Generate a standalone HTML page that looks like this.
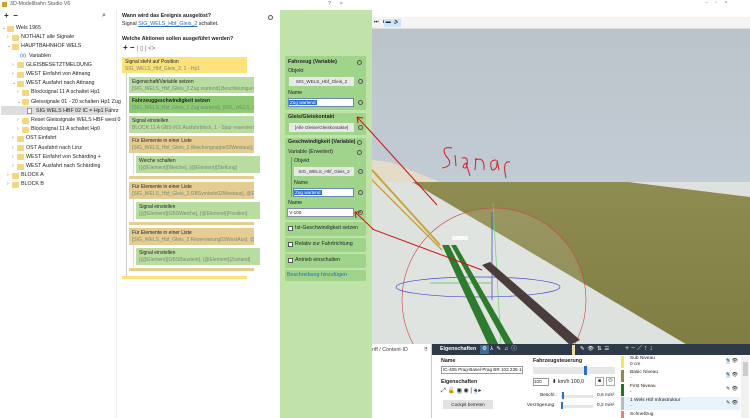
<!DOCTYPE html>
<html><head><meta charset="utf-8"><style>
*{margin:0;padding:0;box-sizing:border-box}
body{width:750px;height:418px;overflow:hidden;position:relative;font-family:"Liberation Sans",sans-serif;background:#fff;color:#222}
.a{position:absolute}
.t{position:absolute;font-size:5.3px;white-space:nowrap;line-height:7px}
.f{position:absolute;width:7px;height:6px;background:#f3d680;border-radius:1px}
.blk{position:absolute;padding:2px 3px;font-size:5px;line-height:7px;white-space:nowrap;overflow:hidden}
.blk i{font-style:normal;display:block;color:#7a8a70}
.y{background:#fbe27a}.g{background:#b9dca0}.dg{background:#8ccb72}.tn{background:#e5cc93}
.gb{position:absolute;background:#9fd48a;border-radius:1px}
.fld{position:absolute;background:#e8e8e8;font-size:4.6px;text-align:center;line-height:9px;color:#333}
.sel{position:absolute;background:#fff;border:1px solid #6a8ab0;font-size:4.6px;line-height:7px}
.sel b{background:#2d6fd1;color:#fff;font-weight:normal;padding:0 1px}
.dot{position:absolute;width:5px;height:5px;border:1.2px solid #555;border-radius:50%}
.cb{position:absolute;width:5px;height:5px;border:1px solid #555;background:#fff}
</style></head><body>
<div class="a" style="left:2px;top:2px;width:5px;height:5px;background:#c9a227"></div>
<div class="t" style="left:10px;top:1px;color:#555">3D-Modellbahn Studio V6</div>
<div class="t" style="left:328px;top:1px;color:#666">?&nbsp;&nbsp;&nbsp;&nbsp;&nbsp;&nbsp;×</div>
<div class="t" style="left:4px;top:12px;font-size:8px;font-weight:bold">+&nbsp;&nbsp;−</div>
<div class="t" style="left:102px;top:12px;font-size:7px">⌕</div>
<div class="a" style="left:116px;top:10px;width:1px;height:408px;background:#eee"></div>
<div class="a" style="left:1px;top:106px;width:110px;height:9px;background:#ddd"></div>
<div id="tree"></div>
<div class="t" style="left:122px;top:13px;font-weight:bold">Wann wird das Ereignis ausgelöst?</div>
<div class="t" style="left:122px;top:21px">Signal <span style="color:#2a6ab8;text-decoration:underline">SIG_WELS_Hbf_Gleis_2</span> schaltet.</div>
<div class="dot" style="left:268px;top:15px"></div>
<div class="t" style="left:122px;top:36px;font-weight:bold">Welche Aktionen sollen ausgeführt werden?</div>
<div class="t" style="left:123px;top:44px;font-size:8px;font-weight:bold">+ − <span style="font-weight:normal;font-size:6px;color:#666">| ▯ | &lt;&gt;</span></div>
<div class="a" style="left:126px;top:73px;width:1px;height:205px;background:#ccc"></div>
<div class="a" style="left:133px;top:153px;width:1px;height:22px;background:#ddd"></div>
<div class="a" style="left:133px;top:199px;width:1px;height:22px;background:#ddd"></div>
<div class="a" style="left:133px;top:245px;width:1px;height:22px;background:#ddd"></div>
<div class="blk y" style="left:122px;top:57px;width:125px;height:16px">Signal steht auf Position<i>SIG_WELS_Hbf_Gleis_2, 1 - Hp1</i></div>
<div class="blk g" style="left:129px;top:77px;width:125px;height:16px">Eigenschaft/Variable setzen<i>[SIG_WELS_Hbf_Gleis_2.Zug wartend].Beschleunigung] ...</i></div>
<div class="blk dg" style="left:129px;top:96px;width:125px;height:17px"><b>Fahrzeuggeschwindigkeit setzen</b><i>[SIG_WELS_Hbf_Gleis_2.Zug wartend], [SIG_WELS_Hbf...</i></div>
<div class="blk g" style="left:129px;top:116px;width:125px;height:17px">Signal einstellen<i>BLOCK 11 A GBS #01 Ausfahrblock, 1 - Spur reserviert</i></div>
<div class="blk tn" style="left:129px;top:136px;width:125px;height:17px">Für Elemente in einer Liste<i>[SIG_WELS_Hbf_Gleis_2.Weichengruppe02Westaus], @...</i></div>
<div class="blk g" style="left:136px;top:156px;width:124px;height:17px">Weiche schalten<i>[{@Element}[Weiche], {@Element}[Stellung]</i></div>
<div class="a tn" style="left:129px;top:176px;width:125px;height:3px"></div>
<div class="blk tn" style="left:129px;top:182px;width:125px;height:17px">Für Elemente in einer Liste<i>[SIG_WELS_Hbf_Gleis_2.GBSymbole02Westaus], @Element</i></div>
<div class="blk g" style="left:136px;top:202px;width:124px;height:17px">Signal einstellen<i>[{@Element}[GBSWeiche], {@Element}[Position]</i></div>
<div class="a tn" style="left:129px;top:222px;width:125px;height:3px"></div>
<div class="blk tn" style="left:129px;top:228px;width:125px;height:17px">Für Elemente in einer Liste<i>[SIG_WELS_Hbf_Gleis_2.Reservierung02WestAus], @Ele...</i></div>
<div class="blk g" style="left:136px;top:248px;width:124px;height:17px">Signal einstellen<i>[{@Element}[GBSBaustein], {@Element}[Zustand]</i></div>
<div class="a tn" style="left:129px;top:268px;width:125px;height:3px"></div>
<div class="a y" style="left:122px;top:276px;width:125px;height:3px"></div>
<div class="a" style="left:280px;top:10px;width:92px;height:408px;background:#bfe3a8"></div>
<div class="gb" style="left:285px;top:56px;width:81px;height:54px"></div>
<div class="t" style="left:288px;top:59px;font-weight:bold">Fahrzeug (Variable)</div><div class="dot" style="left:357px;top:60px"></div>
<div class="t" style="left:288px;top:68px">Objekt</div>
<div class="fld" style="left:289px;top:77px;width:65px;height:9px">SIG_WELS_Hbf_Gleis_2</div><div class="dot" style="left:358px;top:79px"></div>
<div class="t" style="left:288px;top:90px">Name</div>
<div class="sel" style="left:288px;top:98px;width:66px;height:9px"><b>Zug wartend</b></div><div class="dot" style="left:358px;top:100px"></div>
<div class="gb" style="left:285px;top:113px;width:81px;height:22px"></div>
<div class="t" style="left:288px;top:114px;font-weight:bold">Gleis/Gleiskontakt</div>
<div class="fld" style="left:289px;top:123px;width:65px;height:9px">[Alle Gleise/Gleiskontakte]</div><div class="dot" style="left:358px;top:125px"></div>
<div class="gb" style="left:285px;top:138px;width:81px;height:82px"></div>
<div class="t" style="left:288px;top:139px;font-weight:bold">Geschwindigkeit (Variable)</div><div class="dot" style="left:357px;top:140px"></div>
<div class="t" style="left:288px;top:149px">Variable (Erweitert)</div><div class="dot" style="left:357px;top:150px"></div>
<div class="a" style="left:291px;top:157px;width:1px;height:40px;background:#7a9a6a"></div>
<div class="t" style="left:294px;top:158px">Objekt</div>
<div class="fld" style="left:294px;top:167px;width:60px;height:9px">SIG_WELS_Hbf_Gleis_2</div><div class="dot" style="left:358px;top:169px"></div>
<div class="t" style="left:294px;top:180px">Name</div>
<div class="sel" style="left:293px;top:188px;width:61px;height:9px"><b>Zug wartend</b></div><div class="dot" style="left:358px;top:190px"></div>
<div class="t" style="left:288px;top:200px">Name</div>
<div class="sel" style="left:287px;top:208px;width:67px;height:9px;border-color:#88a">&nbsp;V-100</div><div class="dot" style="left:358px;top:210px"></div>
<div class="gb" style="left:285px;top:222px;width:81px;height:14px"></div><div class="cb" style="left:288px;top:226px"></div><div class="t" style="left:295px;top:225px">Ist-Geschwindigkeit setzen</div>
<div class="gb" style="left:285px;top:238px;width:81px;height:14px"></div><div class="cb" style="left:288px;top:242px"></div><div class="t" style="left:295px;top:241px">Relativ zur Fahrtrichtung</div>
<div class="gb" style="left:285px;top:254px;width:81px;height:14px"></div><div class="cb" style="left:288px;top:258px"></div><div class="t" style="left:295px;top:257px">Antrieb einschalten</div>
<div class="gb" style="left:285px;top:270px;width:81px;height:11px"></div><div class="t" style="left:287px;top:272px;color:#2a6ab8">Beschreibung hinzufügen</div>
<div class="a" style="left:372px;top:0;width:378px;height:17px;background:#fff"></div>
<div class="t" style="left:705px;top:0;color:#888">–&nbsp;&nbsp;&nbsp;&nbsp;&nbsp;▫&nbsp;&nbsp;&nbsp;&nbsp;&nbsp;×</div>
<div class="a" style="left:372px;top:17px;width:378px;height:12px;background:#f4f4f4;border-bottom:1px solid #ddd"></div>
<div class="a" style="left:384px;top:19px;width:17px;height:8px;background:#cfe3f5"></div>
<div class="t" style="left:374px;top:19px;font-size:5px">⏭ &nbsp;&nbsp;⭳ ▬ &nbsp;🔈</div>
<svg class="a" style="left:372px;top:29px" width="378" height="389" viewBox="372 29 378 389">
<defs><linearGradient id="sky" x1="0" y1="0" x2="0" y2="1"><stop offset="0" stop-color="#bcc4ca"/><stop offset="1" stop-color="#c2ccd5"/></linearGradient>
<linearGradient id="gr" x1="0" y1="0" x2="0" y2="1"><stop offset="0" stop-color="#8f8c52"/><stop offset="1" stop-color="#7d7a3f"/></linearGradient></defs>
<rect x="372" y="29" width="378" height="160" fill="url(#sky)"/>
<rect x="372" y="182" width="378" height="240" fill="#dde2df"/>
<polygon points="412,182 628,182 750,197 750,382" fill="url(#gr)"/>
<polygon points="372,160 390,162 440,182 372,182" fill="#ece0c4" opacity=".8"/>
<circle cx="494" cy="300" r="92" fill="#f4f4ec" opacity=".12"/>
<circle cx="494" cy="300" r="92" fill="none" stroke="#d04040" stroke-width=".6"/>
<ellipse cx="478" cy="287" rx="82" ry="10" fill="none" stroke="#4a4ad0" stroke-width=".7"/>
<line x1="492" y1="212" x2="492" y2="300" stroke="#5050c0" stroke-width=".8"/>
<line x1="430" y1="283" x2="492" y2="283" stroke="#50c050" stroke-width=".8"/>
<line x1="493" y1="203" x2="505" y2="418" stroke="#70d070" stroke-width=".7"/>
<line x1="372" y1="170" x2="440" y2="245" stroke="#c9a23a" stroke-width="2"/>
<line x1="372" y1="180" x2="442" y2="250" stroke="#c9a23a" stroke-width="1.5"/>
<polygon points="442,245 449,245 535,418 522,418" fill="#2e7a2e"/>
<polygon points="451,245 456,245 556,418 546,418" fill="#2e7a2e"/>
<polygon points="482,265 490,262 580,340 570,345" fill="#4a3e3c"/>
<rect x="452" y="236" width="16" height="4" fill="#fff" opacity=".8"/>
<path d="M452,148 Q440,146 446,156 Q455,166 442,168 M455,155 L456,166 M462,158 Q470,156 466,168 Q460,168 466,163 L470,176 M476,158 L475,170 M475,160 Q485,156 484,170 M496,160 Q488,160 492,170 Q498,170 497,160 L499,170 M510,162 Q502,160 506,178" fill="none" stroke="#d02020" stroke-width="1"/>
<line x1="372" y1="133" x2="437" y2="205" stroke="#cc1111" stroke-width="1"/>
<line x1="372" y1="229" x2="482" y2="270" stroke="#cc1111" stroke-width="1"/>
</svg>
<svg class="a" style="left:0;top:0" width="750" height="418">
<line x1="357" y1="117" x2="373" y2="134" stroke="#cc1111" stroke-width="1"/>
<path d="M357,117 l1,6 M357,117 l6,1" stroke="#cc1111" stroke-width="1" fill="none"/>
<line x1="355" y1="212" x2="373" y2="229" stroke="#cc1111" stroke-width="1"/>
<path d="M355,212 l1,6 M355,212 l6,0" stroke="#cc1111" stroke-width="1" fill="none"/>
</svg>
<div class="a" style="left:372px;top:344px;width:60px;height:74px;background:#fff;border-right:1px solid #ccc"></div>
<div class="t" style="left:372px;top:347px;color:#444">riff / Content-ID</div>
<div class="t" style="left:424px;top:347px;font-size:5px">⠿</div>
<div class="a" style="left:432px;top:344px;width:189px;height:11px;background:#2f3a48"></div>
<div class="t" style="left:440px;top:346px;color:#fff;font-weight:bold">Eigenschaften</div>
<div class="a" style="left:480px;top:345px;width:9px;height:9px;background:#3f6b8f"></div>
<div class="t" style="left:482px;top:346px;color:#fff;font-size:5.5px">⚙ &nbsp;⅄ &nbsp;✎ &nbsp;♫ &nbsp;ⓘ</div>
<div class="a" style="left:572px;top:345px;width:3px;height:10px;background:#f0d9a0"></div>
<div class="t" style="left:580px;top:346px;color:#fff">✎ &nbsp;👁 &nbsp;⇅ &nbsp;☰</div>
<div class="a" style="left:432px;top:355px;width:189px;height:63px;background:#fff"></div>
<div class="t" style="left:441px;top:358px;font-weight:bold">Name</div>
<div class="a" style="left:441px;top:366px;width:82px;height:8px;border:1px solid #999;font-size:4.6px;line-height:6px;padding-left:1px">IC-405 Prag-Basel-Prag BR 103 235-1</div>
<div class="t" style="left:441px;top:379px;font-weight:bold">Eigenschaften</div>
<div class="t" style="left:441px;top:388px;font-size:6px">⤢ 🔓 <span style="background:#cfe3f5">◉</span> ◉ | <span style="background:#cfe3f5">◂</span> ▸</div>
<div class="a" style="left:443px;top:400px;width:50px;height:9px;background:#e2e2e2;font-size:4.6px;text-align:center;line-height:9px">Cockpit betreten</div>
<div class="t" style="left:533px;top:358px;font-weight:bold">Fahrzeugsteuerung</div>
<div class="a" style="left:533px;top:367px;width:82px;height:7px;background:#e6e6e6"></div>
<div class="a" style="left:584px;top:366px;width:3px;height:9px;background:#2c6fc0"></div>
<div class="a" style="left:533px;top:378px;width:16px;height:8px;border:1px solid #999;font-size:4.6px;line-height:6px">100</div>
<div class="t" style="left:552px;top:379px">⬍ km/h 100,0</div>
<div class="a" style="left:595px;top:377px;width:9px;height:9px;border:1px solid #aaa;font-size:5px;text-align:center;line-height:7px">■</div>
<div class="a" style="left:606px;top:377px;width:9px;height:9px;border:1px solid #aaa;font-size:5px;text-align:center;line-height:7px">⏻</div>
<div class="t" style="left:540px;top:392px;font-size:4.8px">Beschl.:</div><div class="a" style="left:561px;top:395px;width:32px;height:3px;background:#e6e6e6"></div><div class="a" style="left:562px;top:392px;width:2px;height:7px;background:#2c6fc0"></div><div class="t" style="left:597px;top:392px;font-size:4.8px">0,6 m/s²</div>
<div class="t" style="left:527px;top:402px;font-size:4.8px">Verzögerung:</div><div class="a" style="left:561px;top:405px;width:32px;height:3px;background:#e6e6e6"></div><div class="a" style="left:561px;top:402px;width:2px;height:7px;background:#2c6fc0"></div><div class="t" style="left:597px;top:402px;font-size:4.8px">0,2 m/s²</div>
<div class="a" style="left:621px;top:344px;width:129px;height:11px;background:#2f3a48"></div>
<div class="t" style="left:625px;top:345px;color:#ddd;font-size:7px">+ − ⟋ ↑ ↓</div>
<div class="a" style="left:621px;top:355px;width:129px;height:63px;background:#fff"></div>
<div class="a" style="left:621px;top:356px;width:3px;height:12px;background:#f5e84a"></div>
<div class="t" style="left:630px;top:356px;font-size:4.8px;line-height:6px">Sub Niveau<br>0 cm</div>
<div class="a" style="left:621px;top:370px;width:3px;height:12px;background:#8a8a4a"></div>
<div class="t" style="left:630px;top:370px;font-size:4.8px;line-height:6px">Basic Niveau<br>-</div>
<div class="a" style="left:621px;top:384px;width:3px;height:12px;background:#1a7a1a"></div>
<div class="t" style="left:630px;top:384px;font-size:4.8px;line-height:6px">First Niveau<br>-</div>
<div class="a" style="left:624px;top:397px;width:116px;height:13px;background:#e8f2fb"></div>
<div class="a" style="left:621px;top:397px;width:3px;height:13px;background:#bbb"></div>
<div class="t" style="left:630px;top:398px;font-size:4.8px;line-height:6px">1 Wels Hbf Infrastruktur<br>-</div>
<div class="a" style="left:621px;top:411px;width:3px;height:7px;background:#e88080"></div>
<div class="t" style="left:630px;top:411px;font-size:4.8px">Schnellzug</div>
<div class="t" style="left:726px;top:358px;font-size:5px"><span style="background:#cfe3f5">✎</span> 👁<br><br><span style="background:#cfe3f5">✎</span> 👁<br><br>✎ 👁<br><br>✎ 👁</div>
<div class="a" style="left:741px;top:356px;width:8px;height:62px;background:#f0f0f0"></div>
<div class="a" style="left:743px;top:362px;width:5px;height:14px;background:#ccc"></div>
<script>
var rows=[[1,"Wels 1965",1],[2,"NOTHALT alle Signale",0],[2,"HAUPTBAHNHOF WELS",1],[3,"(x) Variablen",2],[3,"GLEISBESETZTMELDUNG",0],[3,"WEST Einfahrt  von Attnang",0],[3,"WEST Ausfahrt  nach  Attnang",1],[4,"Blocksignal  11 A  schaltet  Hp1",0],[4,"Gleissignale  01 - 20  schalten Hp1  Zug",1],[5,"SIG  WELS  HBF  02  IC = Hp1  Fahrz",3],[4,"Reset  Gleissignale  WELS  HBF west  0",0],[4,"Blocksignal  11 A  schaltet  Hp0",0],[3,"OST  Einfahrt",0],[3,"OST  Ausfahrt  nach Linz",0],[3,"WEST Einfahrt  von  Schärding  +",0],[3,"WEST Ausfahrt  nach Schärding",0],[2,"BLOCK  A",0],[2,"BLOCK  B",0]];
var h="";rows.forEach(function(r,i){var y=25+i*9.2,x=r[0]*5;
if(r[2]!=2&&r[2]!=3)h+='<div class="t" style="left:'+(x-3)+'px;top:'+y+'px;color:#777;font-size:5px">'+(r[2]==1?'⌄':'›')+'</div>';
if(r[2]==2)h+='<div class="t" style="left:'+(x+5)+'px;top:'+y+'px;color:#2a6ab8">(x)</div><div class="t" style="left:'+(x+14)+'px;top:'+y+'px">Variablen</div>';
else{h+=r[2]==3?'<div class="a" style="left:'+(x+2)+'px;top:'+(y+0.5)+'px;width:5px;height:6px;border:1px solid #999;background:#fff"></div>':'<div class="f" style="left:'+(x+2)+'px;top:'+(y+0.5)+'px"></div>';
h+='<div class="t" style="left:'+(x+11)+'px;top:'+y+'px">'+r[1]+'</div>';}});
document.getElementById("tree").innerHTML=h;
</script>
</body></html>
